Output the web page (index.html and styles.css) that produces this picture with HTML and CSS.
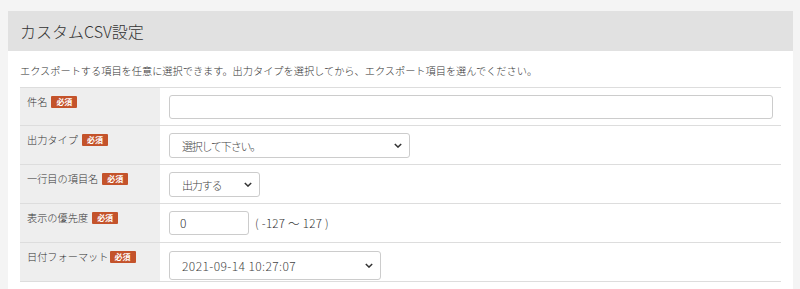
FILE: index.html
```html
<!DOCTYPE html>
<html lang="ja">
<head>
<meta charset="utf-8">
<link rel="stylesheet" href="styles.css">
</head>
<body>
<div class="card">
  <div class="card-header"><h1 class="title">カスタムCSV設定</h1></div>
  <div class="card-body">
    <p class="desc">エクスポートする項目を任意に選択できます。出力タイプを選択してから、エクスポート項目を選んでください。</p>
    <div class="form">
      <div class="row">
        <div class="label">件名<span class="badge">必須</span></div>
        <div class="field"><div class="input input-full"></div></div>
      </div>
      <div class="row">
        <div class="label">出力タイプ<span class="badge">必須</span></div>
        <div class="field"><div class="select sel-type"><span class="jp">選択して下さい。</span><svg class="chev" viewBox="0 0 10 6"><path d="M1 1 L5 5 L9 1"/></svg></div></div>
      </div>
      <div class="row">
        <div class="label">一行目の項目名<span class="badge">必須</span></div>
        <div class="field"><div class="select sel-out"><span class="jp">出力する</span><svg class="chev" viewBox="0 0 10 6"><path d="M1 1 L5 5 L9 1"/></svg></div></div>
      </div>
      <div class="row">
        <div class="label">表示の優先度<span class="badge">必須</span></div>
        <div class="field"><div class="input input-num">0</div><span class="range">( -127 ～ 127 )</span></div>
      </div>
      <div class="row">
        <div class="label">日付フォーマット<span class="badge badge-tight">必須</span></div>
        <div class="field"><div class="select sel-date"><span class="num">2021-09-14 10:27:07</span><svg class="chev" viewBox="0 0 10 6"><path d="M1 1 L5 5 L9 1"/></svg></div></div>
      </div>
    </div>
  </div>
</div>
</body>
</html>
```
FILE: styles.css
```css
html, body {
  margin: 0;
  padding: 0;
}
body {
  background: #f4f4f4;
  font-family: "Noto Sans CJK JP", "Noto Sans", sans-serif;
  font-weight: 300;
  color: #333;
  padding: 11px 7px 0 8px;
  height: 278px;
}
.card {
  background: #fff;
  height: 100%;
}
.card-header {
  background: #e1e1e1;
  height: 40px;
  display: flex;
  align-items: center;
  padding-left: 12px;
}
.title {
  margin: 0;
  font-size: 16px;
  font-weight: 300;
  color: #333;
  line-height: 20px;
}
.card-body {
  padding: 12px 12px 0 12px;
}
.desc {
  margin: 0 0 8px 0;
  font-size: 10.2px;
  line-height: 16px;
}
.form {
  border-top: 1px solid #dddddd;
}
.row {
  display: grid;
  grid-template-columns: 140px 1fr;
  border-bottom: 1px solid #dddddd;
  height: 38px;
}
.row:first-child { height: 37px; }
.label {
  background: #eeeeee;
  font-size: 10.2px;
  padding: 6px 0 0 7px;
  display: flex;
  align-items: flex-start;
  line-height: 16px;
}
.badge {
  display: inline-block;
  background: #c4532b;
  color: #fff;
  font-size: 8px;
  font-weight: bold;
  line-height: 12px;
  padding: 0 5px;
  margin-left: 4px;
  margin-top: 2px;
  border-radius: 1px;
}
.badge-tight { margin-left: 1px; }
.field {
  padding: 7px 8px 0 9px;
  display: flex;
  align-items: flex-start;
  font-size: 12px;
}
.input {
  box-sizing: border-box;
  border: 1px solid #cccccc;
  border-radius: 3px;
  height: 24px;
  background: #fff;
  font-size: 12px;
  line-height: 22px;
  padding-left: 10px;
}
.input-full { width: 604px; }
.input-num { width: 80px; }
.range {
  font-size: 11.5px;
  margin-left: 6px;
  line-height: 24px;
  letter-spacing: 0.3px;
}
.select {
  box-sizing: border-box;
  border: 1px solid #cccccc;
  border-radius: 3px;
  height: 25px;
  display: flex;
  align-items: center;
  justify-content: space-between;
  padding: 0 7px 0 12px;
  font-size: 11.5px;
  color: #444;
}
.jp { letter-spacing: -1.2px; font-size: 11px; }
.num { font-size: 12px; letter-spacing: 0.4px; }
.sel-type { width: 241px; }
.sel-out { width: 91px; }
.sel-date { width: 212px; height: 29px; margin-top: 1px; }
.chev {
  width: 8px;
  height: 5px;
  fill: none;
  stroke: #333;
  stroke-width: 1.8;
}
```
